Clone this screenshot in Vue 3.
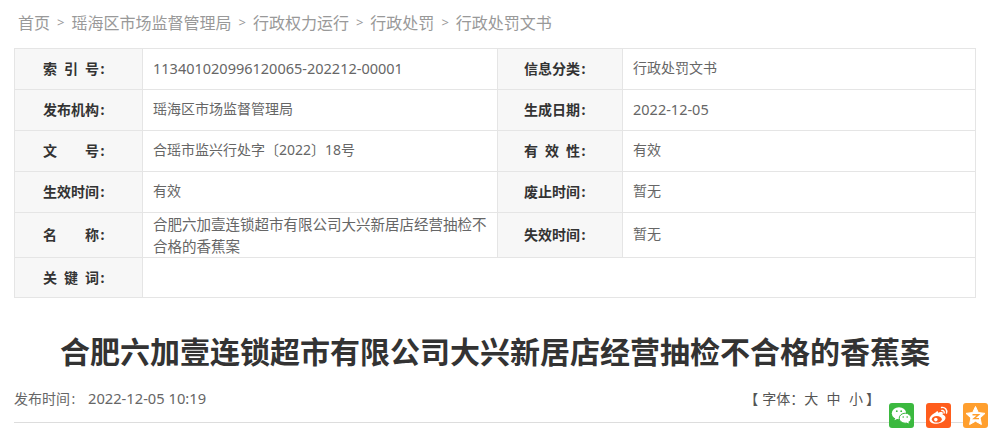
<script setup>
const crumbs = ['首页', '瑶海区市场监督管理局', '行政权力运行', '行政处罚', '行政处罚文书']
const rows = [
  { h: 41, a: '索\u2002引\u2002号\u200a:', b: '11340102099612' + '0065-202212-00001', bBig: true, c: '信息分类\u200a:', d: '行政处罚文书' },
  { h: 41, a: '发布机构\u200a:', b: '瑶海区市场监督管理局', c: '生成日期\u200a:', d: '2022-12-05', dBig: true },
  { h: 41, a: '文\u3000\u3000号\u200a:', b: '合瑶市监兴行处字〔2022〕18号', c: '有\u2002效\u2002性\u200a:', d: '有效' },
  { h: 41, a: '生效时间\u200a:', b: '有效', c: '废止时间\u200a:', d: '暂无' },
  { h: 45, a: '名\u3000\u3000称\u200a:', b: '合肥六加壹连锁超市有限公司大兴新居店经营抽检不合格的香蕉案', bBig: true, flush: true, c: '失效时间\u200a:', d: '暂无' },
  { h: 40, a: '关\u2002键\u2002词\u200a:', b: '', wide: true },
]
</script>

<template>
  <div class="page">
    <nav class="crumbs">
      <template v-for="(c, i) in crumbs" :key="c">
        <span v-if="i" class="sep">&gt;</span>
        <span>{{ c }}</span>
      </template>
    </nav>
    <table class="meta">
      <colgroup>
        <col class="c1" /><col class="c2" /><col class="c3" /><col class="c4" />
      </colgroup>
      <tbody>
        <tr v-for="r in rows" :key="r.a" :style="{ height: r.h + 'px' }">
          <th>{{ r.a }}</th>
          <td :colspan="r.wide ? 3 : 1" :class="{ big: r.bBig, flush: r.flush }">{{ r.b }}</td>
          <template v-if="!r.wide">
            <th class="th2">{{ r.c }}</th>
            <td :class="{ big: r.dBig }">{{ r.d }}</td>
          </template>
        </tr>
      </tbody>
    </table>
    <h1 class="title">合肥六加壹连锁超市有限公司大兴新居店经营抽检不合格的香蕉案</h1>
    <div class="info">
      <div class="date"><span class="date-label">发布时间&#8202;:</span><span class="date-value">2022-12-05 10:19</span></div>
      <div class="size"><i class="br-l">【</i>字体：<span>大</span><span>中</span><span>小</span><i class="br-r">】</i></div>
    </div>
    <div class="share">
      <span class="ico wx">
        <svg viewBox="0 0 25 25" width="25" height="25">
          <ellipse cx="10" cy="10.200" rx="7.200" ry="6" fill="#fff" />
          <path d="M6.500 14.500l-1 2.800 3.400-1.800z" fill="#fff" />
          <ellipse cx="16.200" cy="15.200" rx="6" ry="5" fill="#fff" stroke="#3bb93f" stroke-width="1" />
          <path d="M19 18.600l1.200 2-3-1.200z" fill="#fff" />
          <circle cx="7.800" cy="8.200" r=".9" fill="#3bb93f" />
          <circle cx="12.200" cy="8.200" r=".9" fill="#3bb93f" />
          <circle cx="14.200" cy="14" r=".8" fill="#3bb93f" />
          <circle cx="18.200" cy="14" r=".8" fill="#3bb93f" />
        </svg>
      </span>
      <span class="ico wb">
        <svg viewBox="0 0 25 25" width="25" height="25">
          <path d="M9.500 9.500c-3.300 1.700-6.300 4.500-6 7.500.3 2.700 3.800 4 7.300 3.700 4.300-.3 8.700-2.800 8.700-5.900 0-1.700-1.500-2.700-2.900-3 .5-1.300.4-2.400-.6-2.800-1.200-.4-3 .3-4 .8.300-1.400-.4-2.400-2.500-.3z" fill="#fff" />
          <ellipse cx="10.800" cy="16.300" rx="5" ry="3.300" fill="#ff5d1c" />
          <circle cx="9.800" cy="16.600" r="1.800" fill="#fff" />
          <path d="M15.500 4.500c3.400-.6 6 2.200 5 5.600M15.800 7.500c1.700-.3 2.800 1.100 2.300 2.600" fill="none" stroke="#fff" stroke-width="1.400" stroke-linecap="round" />
        </svg>
      </span>
      <span class="ico qz">
        <svg viewBox="0 0 25 25" width="25" height="25">
          <path d="M12.500 3.500l2.800 6 6.700.9-4.900 4.500 1.300 6.600-5.900-3.300-5.900 3.300 1.300-6.600-4.900-4.500 6.700-.9z" fill="#fff" stroke="#fff" stroke-linejoin="round" />
          <path d="M9.500 11.800h6l-4.500 3.800h5" fill="none" stroke="#ff9f2e" stroke-width="1.400" />
        </svg>
      </span>
    </div>
  </div>
</template>

<style scoped>
.page {
  position: relative;
  width: 993px;
  height: 437px;
  overflow: hidden;
  box-sizing: border-box;
  padding: 0 17px 0 14px;
  font-family: "Noto Sans", "Noto Sans CJK SC", sans-serif;
  color: #666;
  background: #fff;
}
.crumbs {
  display: flex;
  align-items: center;
  gap: 7px;
  height: 48px;
  padding: 0 0 4px 4px;
  box-sizing: border-box;
  font-size: 16px;
  color: #999;
}
.sep {
  font-size: 13px;
}
.meta {
  width: 962px;
  table-layout: fixed;
  border-collapse: collapse;
  font-size: 14px;
}
.c1 { width: 128px; }
.c2 { width: 355px; }
.c3 { width: 125px; }
th, td {
  border: 1px solid #e5e5e5;
  padding: 0 0 2px;
  text-align: left;
  box-sizing: border-box;
}
th {
  padding-left: 28px;
  background: #f7f7f7;
  color: #333;
  font-weight: 700;
}
.th2 {
  padding-left: 26px;
}
td {
  padding-left: 10px;
  padding-right: 10px;
  line-height: 22px;
  color: #666;
}
td.big {
  font-size: 14.500px;
}
td.flush {
  padding-bottom: 0;
}
.title {
  margin: 35px 0 0;
  font-size: 30px;
  line-height: 38px;
  font-weight: 700;
  color: #333;
  text-align: center;
}
.info {
  display: flex;
  justify-content: space-between;
  align-items: center;
  height: 37px;
  margin-top: 8px;
  padding-bottom: 6px;
  border-bottom: 1px solid #ddd;
  font-size: 14px;
  color: #666;
}
.date {
  display: flex;
  align-items: center;
}
.date-label {
  width: 74px;
}
.date-value {
  font-size: 14.700px;
}
.size {
  margin-right: 96px;
  color: #555;
}
.size i {
  font-style: normal;
}
.br-l {
  margin-right: 4px;
}
.br-r {
  margin-left: 3px;
}
.size span + span {
  margin-left: 8.400px;
}
.share {
  position: absolute;
  left: 889px;
  top: 403px;
  display: flex;
  gap: 12px;
}
.ico {
  display: block;
  width: 25px;
  height: 25px;
  border-radius: 3px;
}
.ico svg {
  display: block;
}
.wx { background: #3bb93f; }
.wb { background: #ff5d1c; }
.qz { background: #ff9f2e; }
</style>
